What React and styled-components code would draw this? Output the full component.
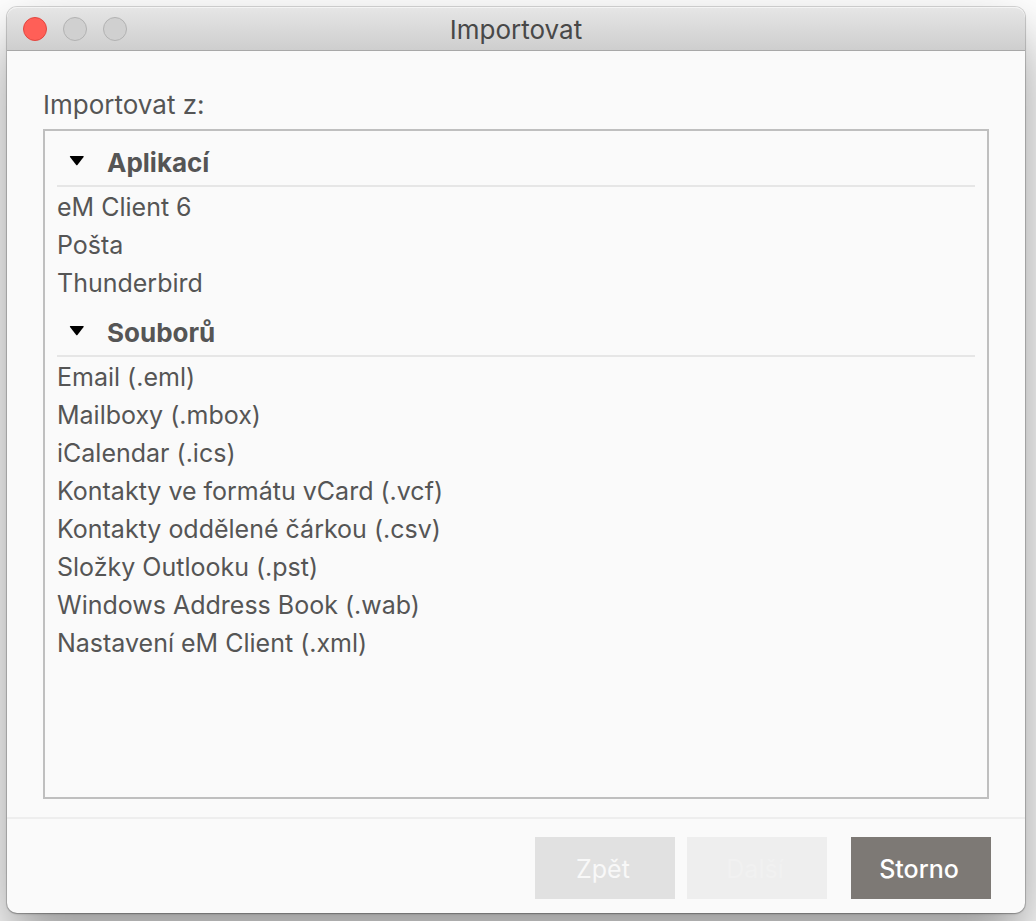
import React, { useState } from "react";
import styled, { createGlobalStyle } from "styled-components";

const GlobalStyle = createGlobalStyle`
  *, *::before, *::after { box-sizing: border-box; }
  html { background: #fff; }
  body {
    margin: 0;
    color: #555;
    font: 400 26px/38px Inter, "Liberation Sans", sans-serif;
  }
  button { font: inherit; color: inherit; border: 0; padding: 0; background: none; }
`;

const Desktop = styled.div`
  min-height: 100vh;
  display: flex;
  padding: 7px 11px 8px 7px;
  overflow: hidden;
  background: #fff;
`;

const Window = styled.main`
  flex: 1;
  min-width: 0;
  display: flex;
  flex-direction: column;
  border-radius: 10px;
  background: #fafafa;
  box-shadow:
    0 0 0 1px rgba(0, 0, 0, 0.14),
    0 1px 2px rgba(0, 0, 0, 0.24),
    0 30px 60px rgba(0, 0, 0, 0.42);
`;

const TitleBar = styled.header`
  display: grid;
  grid-template-columns: 1fr auto 1fr;
  align-items: center;
  height: 44px;
  padding: 0 16px;
  border-radius: 10px 10px 0 0;
  border-bottom: 1px solid #a8a8a8;
  background: linear-gradient(#e6e6e6, #cecece);
  box-shadow: inset 0 1px #f4f4f4;
`;

const Lights = styled.div`
  display: flex;
  gap: 16px;
`;

const Light = styled.button`
  width: 24px;
  height: 24px;
  border-radius: 50%;
  border: 1px solid ${(p) => (p.$close ? "#e2463f" : "#b2b2b2")};
  background: ${(p) => (p.$close ? "#ff5f57" : "#d0d0d0")};
`;

const Title = styled.h1`
  margin: 0;
  padding-top: 2px;
  font-size: 26px;
  font-weight: 400;
  line-height: 38px;
  color: #484848;
`;

const Content = styled.section`
  flex: 1;
  display: flex;
  flex-direction: column;
  padding: 36px 36px 18px;
`;

const Label = styled.h2`
  margin: 0 0 6px;
  font-size: 26px;
  font-weight: 400;
  line-height: 36px;
`;

const Sources = styled.div`
  flex: 1;
  padding: 0 12px;
  border: 2px solid #bfbfbf;
`;

const GroupToggle = styled.button`
  display: flex;
  align-items: center;
  width: 100%;
  height: 56px;
  padding: 10px 0 0 12px;
  gap: 22px;
  border-bottom: 2px solid #e6e6e6;
  font-weight: 700;
  text-align: left;
`;

const Arrow = styled.svg`
  width: 16px;
  height: 16px;
  transform: ${(p) => (p.$open ? "none" : "rotate(-90deg)")};
`;

const Items = styled.ul`
  margin: 0;
  padding: 0;
  list-style: none;
`;

const Item = styled.button`
  display: block;
  width: 100%;
  height: 38px;
  padding-top: 2px;
  font-size: 25px;
  line-height: 36px;
  text-align: left;
`;

const Footer = styled.footer`
  display: flex;
  justify-content: flex-end;
  gap: 12px;
  padding: 18px 34px 14px;
  border-top: 2px solid #eee;
`;

const tones = {
  back: ["#e1e1e1", "#f8f8f8"],
  next: ["#eee", "#f1f1f1"],
  cancel: ["#7d7975", "#fff"],
};

const Action = styled.button`
  && {
    width: 140px;
    height: 62px;
    padding: 2px 4px 0 0;
    background: ${(p) => tones[p.$tone][0]};
    color: ${(p) => tones[p.$tone][1]};
    font-weight: ${(p) => (p.$tone === "cancel" ? 500 : 400)};
    font-size: 25px;
    margin-left: ${(p) => (p.$tone === "cancel" ? "12px" : "0")};
  }
`;

const groups = [
  { name: "Aplikací", items: ["eM Client 6", "Pošta", "Thunderbird"] },
  {
    name: "Souborů",
    items: [
      "Email (.eml)",
      "Mailboxy (.mbox)",
      "iCalendar (.ics)",
      "Kontakty ve formátu vCard (.vcf)",
      "Kontakty oddělené čárkou (.csv)",
      "Složky Outlooku (.pst)",
      "Windows Address Book (.wab)",
      "Nastavení eM Client (.xml)",
    ],
  },
];

function Group({ name, items }) {
  const [open, setOpen] = useState(true);
  return (
    <div>
      <GroupToggle type="button" aria-expanded={open} onClick={() => setOpen(!open)}>
        <Arrow $open={open} viewBox="0 0 16 16" aria-hidden="true">
          <path d="M1.5 1h12.6q1.1 0 .5.9L8.6 9.8q-.8 1-1.6 0L1 1.9Q.4 1 1.5 1z" fill="#000" />
        </Arrow>
        {name}
      </GroupToggle>
      {open && (
        <Items>
          {items.map((item) => (
            <li key={item}>
              <Item type="button">{item}</Item>
            </li>
          ))}
        </Items>
      )}
    </div>
  );
}

export default function App() {
  return (
    <>
      <GlobalStyle />
      <Desktop>
        <Window>
          <TitleBar>
            <Lights>
              <Light type="button" $close aria-label="Zavřít" />
              <Light type="button" disabled aria-label="Minimalizovat" />
              <Light type="button" disabled aria-label="Zvětšit" />
            </Lights>
            <Title>Importovat</Title>
          </TitleBar>
          <Content>
            <Label id="sources-label">Importovat z:</Label>
            <Sources role="group" aria-labelledby="sources-label">
              {groups.map((group) => (
                <Group key={group.name} {...group} />
              ))}
            </Sources>
          </Content>
          <Footer>
            <Action type="button" disabled $tone="back">Zpět</Action>
            <Action type="button" disabled $tone="next">Další</Action>
            <Action type="button" $tone="cancel">Storno</Action>
          </Footer>
        </Window>
      </Desktop>
    </>
  );
}
